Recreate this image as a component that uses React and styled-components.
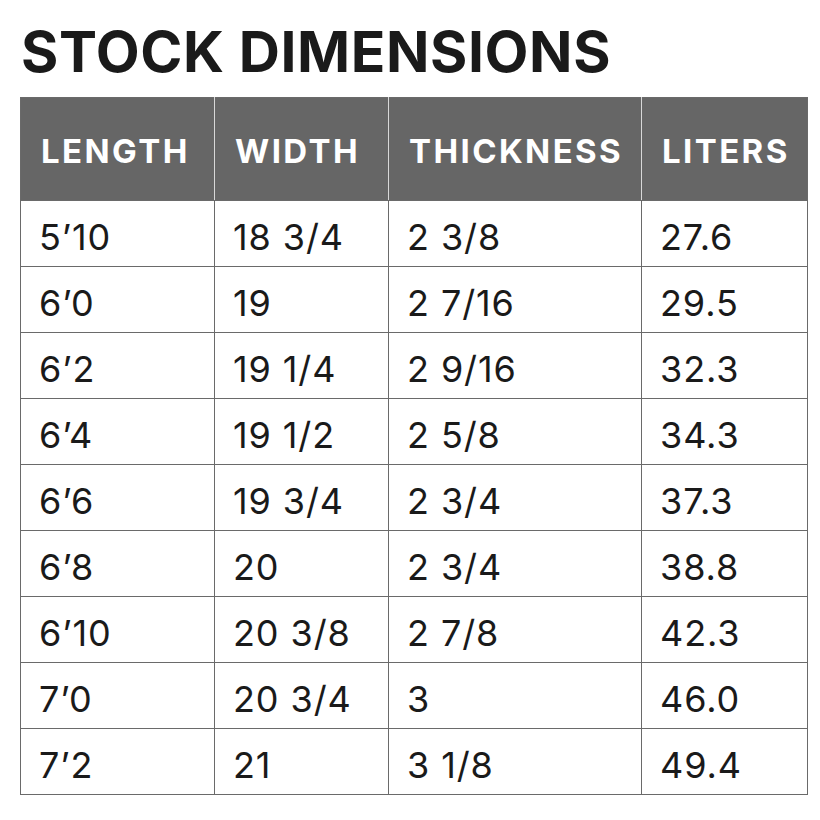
import styled, { createGlobalStyle } from "styled-components";

const GlobalStyle = createGlobalStyle`
  *, *::before, *::after {
    box-sizing: border-box;
  }
  body {
    margin: 0;
    background: #ffffff;
    font-family: Inter, "Liberation Sans", sans-serif;
    color: #1a1a1a;
  }
`;

const StyledPage = styled.div`
  padding: 23px 0 0 20px;
`;

const StyledTitle = styled.h1`
  margin: 0 0 16px 1px;
  font-size: 57px;
  line-height: 58px;
  font-weight: 700;
  letter-spacing: 0.6px;
  color: #1a1a1a;
`;

const StyledTable = styled.table`
  width: 787px;
  border-collapse: collapse;
  table-layout: fixed;
  border: 1px solid #6a6a6a;
`;

const StyledHeadCell = styled.th`
  width: ${(props) => props.$width}px;
  height: 103px;
  padding: 4px 0 0 20px;
  background: #666666;
  color: #ffffff;
  text-align: left;
  font-size: 33px;
  font-weight: 700;
  letter-spacing: 2.4px;
  border-left: 1px solid #d8d8d8;
  border-bottom: 1px solid #6a6a6a;
  white-space: nowrap;
  &:first-child {
    border-left: 1px solid #6a6a6a;
  }
`;

const StyledCell = styled.td`
  height: 66px;
  padding: 7px 0 0 18px;
  font-size: 36px;
  font-weight: 400;
  letter-spacing: 0.9px;
  color: #1a1a1a;
  border: 1px solid #6a6a6a;
  white-space: nowrap;
`;

const columns = [
  { label: "LENGTH", width: 194 },
  { label: "WIDTH", width: 174 },
  { label: "THICKNESS", width: 253 },
  { label: "LITERS", width: 166 },
];

const rows = [
  ["5’10", "18 3/4", "2 3/8", "27.6"],
  ["6’0", "19", "2 7/16", "29.5"],
  ["6’2", "19 1/4", "2 9/16", "32.3"],
  ["6’4", "19 1/2", "2 5/8", "34.3"],
  ["6’6", "19 3/4", "2 3/4", "37.3"],
  ["6’8", "20", "2 3/4", "38.8"],
  ["6’10", "20 3/8", "2 7/8", "42.3"],
  ["7’0", "20 3/4", "3", "46.0"],
  ["7’2", "21", "3 1/8", "49.4"],
];

function App() {
  return (
    <>
      <GlobalStyle />
      <StyledPage>
        <StyledTitle>STOCK DIMENSIONS</StyledTitle>
        <StyledTable>
          <thead>
            <tr>
              {columns.map((col) => (
                <StyledHeadCell key={col.label} $width={col.width}>
                  {col.label}
                </StyledHeadCell>
              ))}
            </tr>
          </thead>
          <tbody>
            {rows.map((row) => (
              <tr key={row[0]}>
                {row.map((value, i) => (
                  <StyledCell key={i}>{value}</StyledCell>
                ))}
              </tr>
            ))}
          </tbody>
        </StyledTable>
      </StyledPage>
    </>
  );
}

export default App;
